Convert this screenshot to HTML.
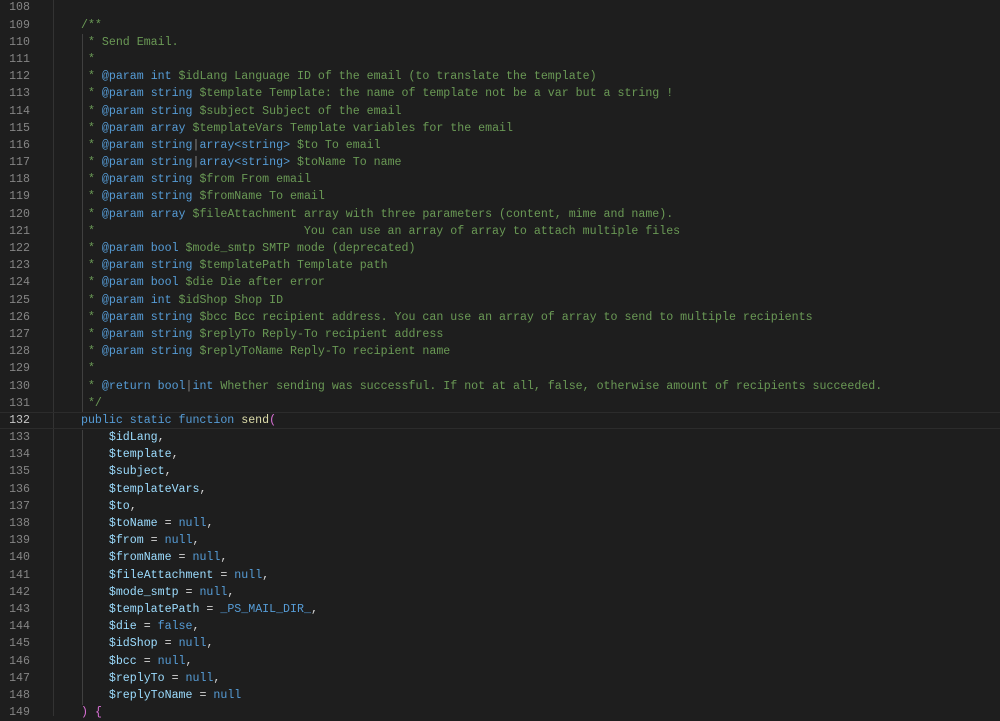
<!DOCTYPE html>
<html><head><meta charset="utf-8"><style>
body{margin:0;width:1000px;height:716px;overflow:hidden;background:#1e1e1e;font-family:Consolas,"Liberation Mono",monospace;font-size:11.62px;}
.w{position:absolute;top:-0.6px;left:0;width:1000px}
.l{height:17.2px;line-height:17.2px;white-space:pre;position:relative}
.n{position:absolute;left:0;width:30px;text-align:right;color:#858585}
.c{position:absolute;left:81px;color:#d4d4d4}
.a .n{color:#c6c6c6}
.a{box-shadow:inset 0 1px #2c2c2c,inset 0 -1px #2c2c2c}
.g{color:#6a9955}.k{color:#569cd6}.v{color:#9cdcfe}.f{color:#dcdcaa}.p{color:#da70d6}.d{color:#8a8a8a}
.sep{position:absolute;left:53px;top:0;width:1px;height:716px;background:#333}
.ig{position:absolute;left:82px;width:1px;background:#404040}
</style></head><body>
<div class="sep"></div>
<div class="ig" style="top:34px;height:378px"></div>
<div class="ig" style="top:430px;height:275px"></div>
<div class="w">
<div class="l"><span class="n">108</span></div>
<div class="l"><span class="n">109</span><span class="c g">/**</span></div>
<div class="l"><span class="n">110</span><span class="c g"> * Send Email.</span></div>
<div class="l"><span class="n">111</span><span class="c g"> *</span></div>
<div class="l"><span class="n">112</span><span class="c g"> * <span class="k">@param</span> <span class="k">int</span> $idLang Language ID of the email (to translate the template)</span></div>
<div class="l"><span class="n">113</span><span class="c g"> * <span class="k">@param</span> <span class="k">string</span> $template Template: the name of template not be a var but a string !</span></div>
<div class="l"><span class="n">114</span><span class="c g"> * <span class="k">@param</span> <span class="k">string</span> $subject Subject of the email</span></div>
<div class="l"><span class="n">115</span><span class="c g"> * <span class="k">@param</span> <span class="k">array</span> $templateVars Template variables for the email</span></div>
<div class="l"><span class="n">116</span><span class="c g"> * <span class="k">@param</span> <span class="k">string</span><span class="d">|</span><span class="k">array&lt;string&gt;</span> $to To email</span></div>
<div class="l"><span class="n">117</span><span class="c g"> * <span class="k">@param</span> <span class="k">string</span><span class="d">|</span><span class="k">array&lt;string&gt;</span> $toName To name</span></div>
<div class="l"><span class="n">118</span><span class="c g"> * <span class="k">@param</span> <span class="k">string</span> $from From email</span></div>
<div class="l"><span class="n">119</span><span class="c g"> * <span class="k">@param</span> <span class="k">string</span> $fromName To email</span></div>
<div class="l"><span class="n">120</span><span class="c g"> * <span class="k">@param</span> <span class="k">array</span> $fileAttachment array with three parameters (content, mime and name).</span></div>
<div class="l"><span class="n">121</span><span class="c g"> *                              You can use an array of array to attach multiple files</span></div>
<div class="l"><span class="n">122</span><span class="c g"> * <span class="k">@param</span> <span class="k">bool</span> $mode_smtp SMTP mode (deprecated)</span></div>
<div class="l"><span class="n">123</span><span class="c g"> * <span class="k">@param</span> <span class="k">string</span> $templatePath Template path</span></div>
<div class="l"><span class="n">124</span><span class="c g"> * <span class="k">@param</span> <span class="k">bool</span> $die Die after error</span></div>
<div class="l"><span class="n">125</span><span class="c g"> * <span class="k">@param</span> <span class="k">int</span> $idShop Shop ID</span></div>
<div class="l"><span class="n">126</span><span class="c g"> * <span class="k">@param</span> <span class="k">string</span> $bcc Bcc recipient address. You can use an array of array to send to multiple recipients</span></div>
<div class="l"><span class="n">127</span><span class="c g"> * <span class="k">@param</span> <span class="k">string</span> $replyTo Reply-To recipient address</span></div>
<div class="l"><span class="n">128</span><span class="c g"> * <span class="k">@param</span> <span class="k">string</span> $replyToName Reply-To recipient name</span></div>
<div class="l"><span class="n">129</span><span class="c g"> *</span></div>
<div class="l"><span class="n">130</span><span class="c g"> * <span class="k">@return</span> <span class="k">bool</span><span class="d">|</span><span class="k">int</span> Whether sending was successful. If not at all, false, otherwise amount of recipients succeeded.</span></div>
<div class="l"><span class="n">131</span><span class="c g"> */</span></div>
<div class="l a"><span class="n">132</span><span class="c"><span class="k">public static function</span> <span class="f">send</span><span class="p">(</span></span></div>
<div class="l"><span class="n">133</span><span class="c">    <span class="v">$idLang</span>,</span></div>
<div class="l"><span class="n">134</span><span class="c">    <span class="v">$template</span>,</span></div>
<div class="l"><span class="n">135</span><span class="c">    <span class="v">$subject</span>,</span></div>
<div class="l"><span class="n">136</span><span class="c">    <span class="v">$templateVars</span>,</span></div>
<div class="l"><span class="n">137</span><span class="c">    <span class="v">$to</span>,</span></div>
<div class="l"><span class="n">138</span><span class="c">    <span class="v">$toName</span> = <span class="k">null</span>,</span></div>
<div class="l"><span class="n">139</span><span class="c">    <span class="v">$from</span> = <span class="k">null</span>,</span></div>
<div class="l"><span class="n">140</span><span class="c">    <span class="v">$fromName</span> = <span class="k">null</span>,</span></div>
<div class="l"><span class="n">141</span><span class="c">    <span class="v">$fileAttachment</span> = <span class="k">null</span>,</span></div>
<div class="l"><span class="n">142</span><span class="c">    <span class="v">$mode_smtp</span> = <span class="k">null</span>,</span></div>
<div class="l"><span class="n">143</span><span class="c">    <span class="v">$templatePath</span> = <span class="k">_PS_MAIL_DIR_</span>,</span></div>
<div class="l"><span class="n">144</span><span class="c">    <span class="v">$die</span> = <span class="k">false</span>,</span></div>
<div class="l"><span class="n">145</span><span class="c">    <span class="v">$idShop</span> = <span class="k">null</span>,</span></div>
<div class="l"><span class="n">146</span><span class="c">    <span class="v">$bcc</span> = <span class="k">null</span>,</span></div>
<div class="l"><span class="n">147</span><span class="c">    <span class="v">$replyTo</span> = <span class="k">null</span>,</span></div>
<div class="l"><span class="n">148</span><span class="c">    <span class="v">$replyToName</span> = <span class="k">null</span></span></div>
<div class="l"><span class="n">149</span><span class="c"><span class="p">)</span> <span class="p">{</span></span></div>
</div>
</body></html>
